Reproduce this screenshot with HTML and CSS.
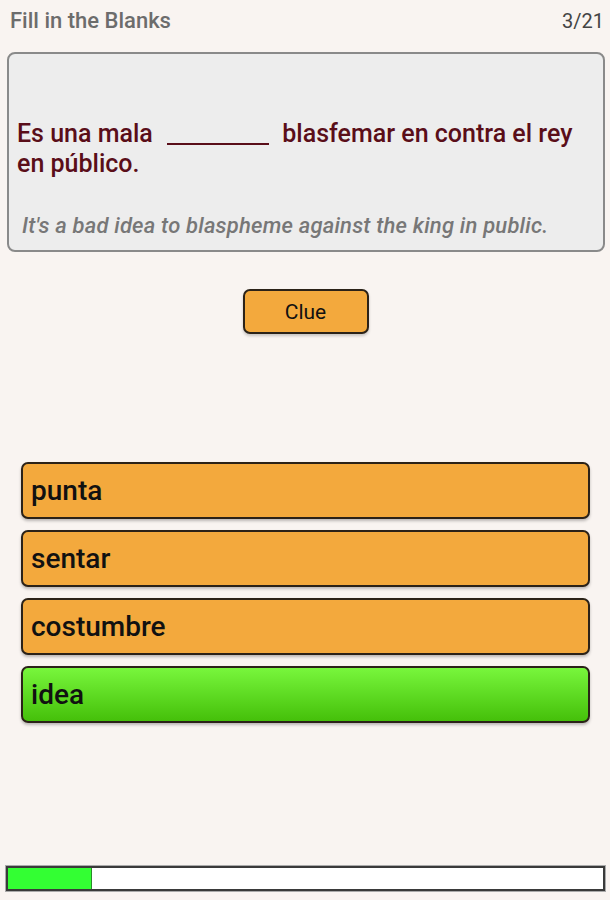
FILE: index.html
```html
<!DOCTYPE html>
<html>
<head>
    <meta charset="utf-8">
    <title>Fill in the Blanks</title>
    <meta name="viewport" content="width=device-width">
    <link rel="stylesheet" href="styles.css">
</head>
<body>
    <div class="page">
        <div class="header">
            <div class="title">Fill in the Blanks</div>
            <div class="count">3/21</div>
        </div>

        <div class="card">
            <div class="sentence">
                <div>Es una mala <span class="blank"></span> blasfemar en contra el rey en público.</div>
            </div>
            <div class="translation">It's a bad idea to blaspheme against the king in public.</div>
        </div>

        <div class="align-center">
            <button type="button" class="btn-clue">Clue</button>
        </div>

        <div class="options">
            <div class="option">punta</div>
            <div class="option">sentar</div>
            <div class="option">costumbre</div>
            <div class="option correct">idea</div>
        </div>

        <div class="progress">
            <div class="progress-fill" style="width: 14%"></div>
        </div>
    </div>
</body>
</html>
```

FILE: styles.css
```css
html,
body {
    height: 100%;
    margin: 0;
    background: #f9f4f1;
    font-family: Roboto, "Liberation Sans", sans-serif;
}
.page {
    height: 900px;
    display: flex;
    flex-direction: column;
    padding: 0 5px 0 6px;
    box-sizing: border-box;
}
.header {
    display: flex;
    justify-content: space-between;
    align-items: center;
    height: 41px;
    padding: 0 1px 0 4px;
}
.title {
    font-size: 22px;
    font-weight: 500;
    color: #6c6c6c;
}
.count {
    font-size: 20px;
    color: #444;
}
.card {
    margin: 11px 0 0 1px;
    height: 200px;
    box-sizing: border-box;
    border: 2px solid #8a8a8a;
    border-radius: 8px;
    background: #ededed;
    display: flex;
    flex-direction: column;
    padding: 0 10px 12px 8px;
}
.sentence {
    flex: 1;
    display: flex;
    align-items: center;
    padding-top: 30px;
    font-size: 25px;
    font-weight: 500;
    line-height: 30px;
    color: #5a0e19;
}
.blank {
    display: inline-block;
    width: 102px;
    margin: 0 7px 0 8px;
    border-bottom: 2px solid #5a0e19;
    vertical-align: -3px;
}
.translation {
    font-size: 22px;
    font-style: italic;
    font-weight: 500;
    letter-spacing: 0.2px;
    color: #777;
    padding-left: 5px;
}
.align-center {
    text-align: center;
}
.btn-clue {
    margin-top: 37px;
    width: 126px;
    height: 45px;
    font-family: inherit;
    font-size: 21px;
    color: #111;
    background: #f3a93d;
    border: 2px solid #2b2218;
    border-radius: 7px;
    box-shadow: 0 2px 3px rgba(0,0,0,0.2);
}
.options {
    margin: 128px 15px 0 15px;
    display: flex;
    flex-direction: column;
    gap: 11px;
}
.option {
    height: 57px;
    box-sizing: border-box;
    border: 2px solid #2b2218;
    border-radius: 7px;
    background: #f3a93d;
    box-shadow: 0 2px 3px rgba(0,0,0,0.25);
    display: flex;
    align-items: center;
    padding-left: 8px;
    font-size: 28px;
    font-weight: 500;
    color: #111;
}
.correct {
    background: linear-gradient(#78f63c, #45c00a);
}
.progress {
    margin-top: 143px;
    height: 25px;
    box-sizing: border-box;
    border: 2px solid #3a3a3a;
    box-shadow: 0 0 0 1px #aaa;
    background: #fff;
}
.progress-fill {
    height: 100%;
    background: #33ff33;
    border-right: 1px solid #2a8a2a;
}
```
